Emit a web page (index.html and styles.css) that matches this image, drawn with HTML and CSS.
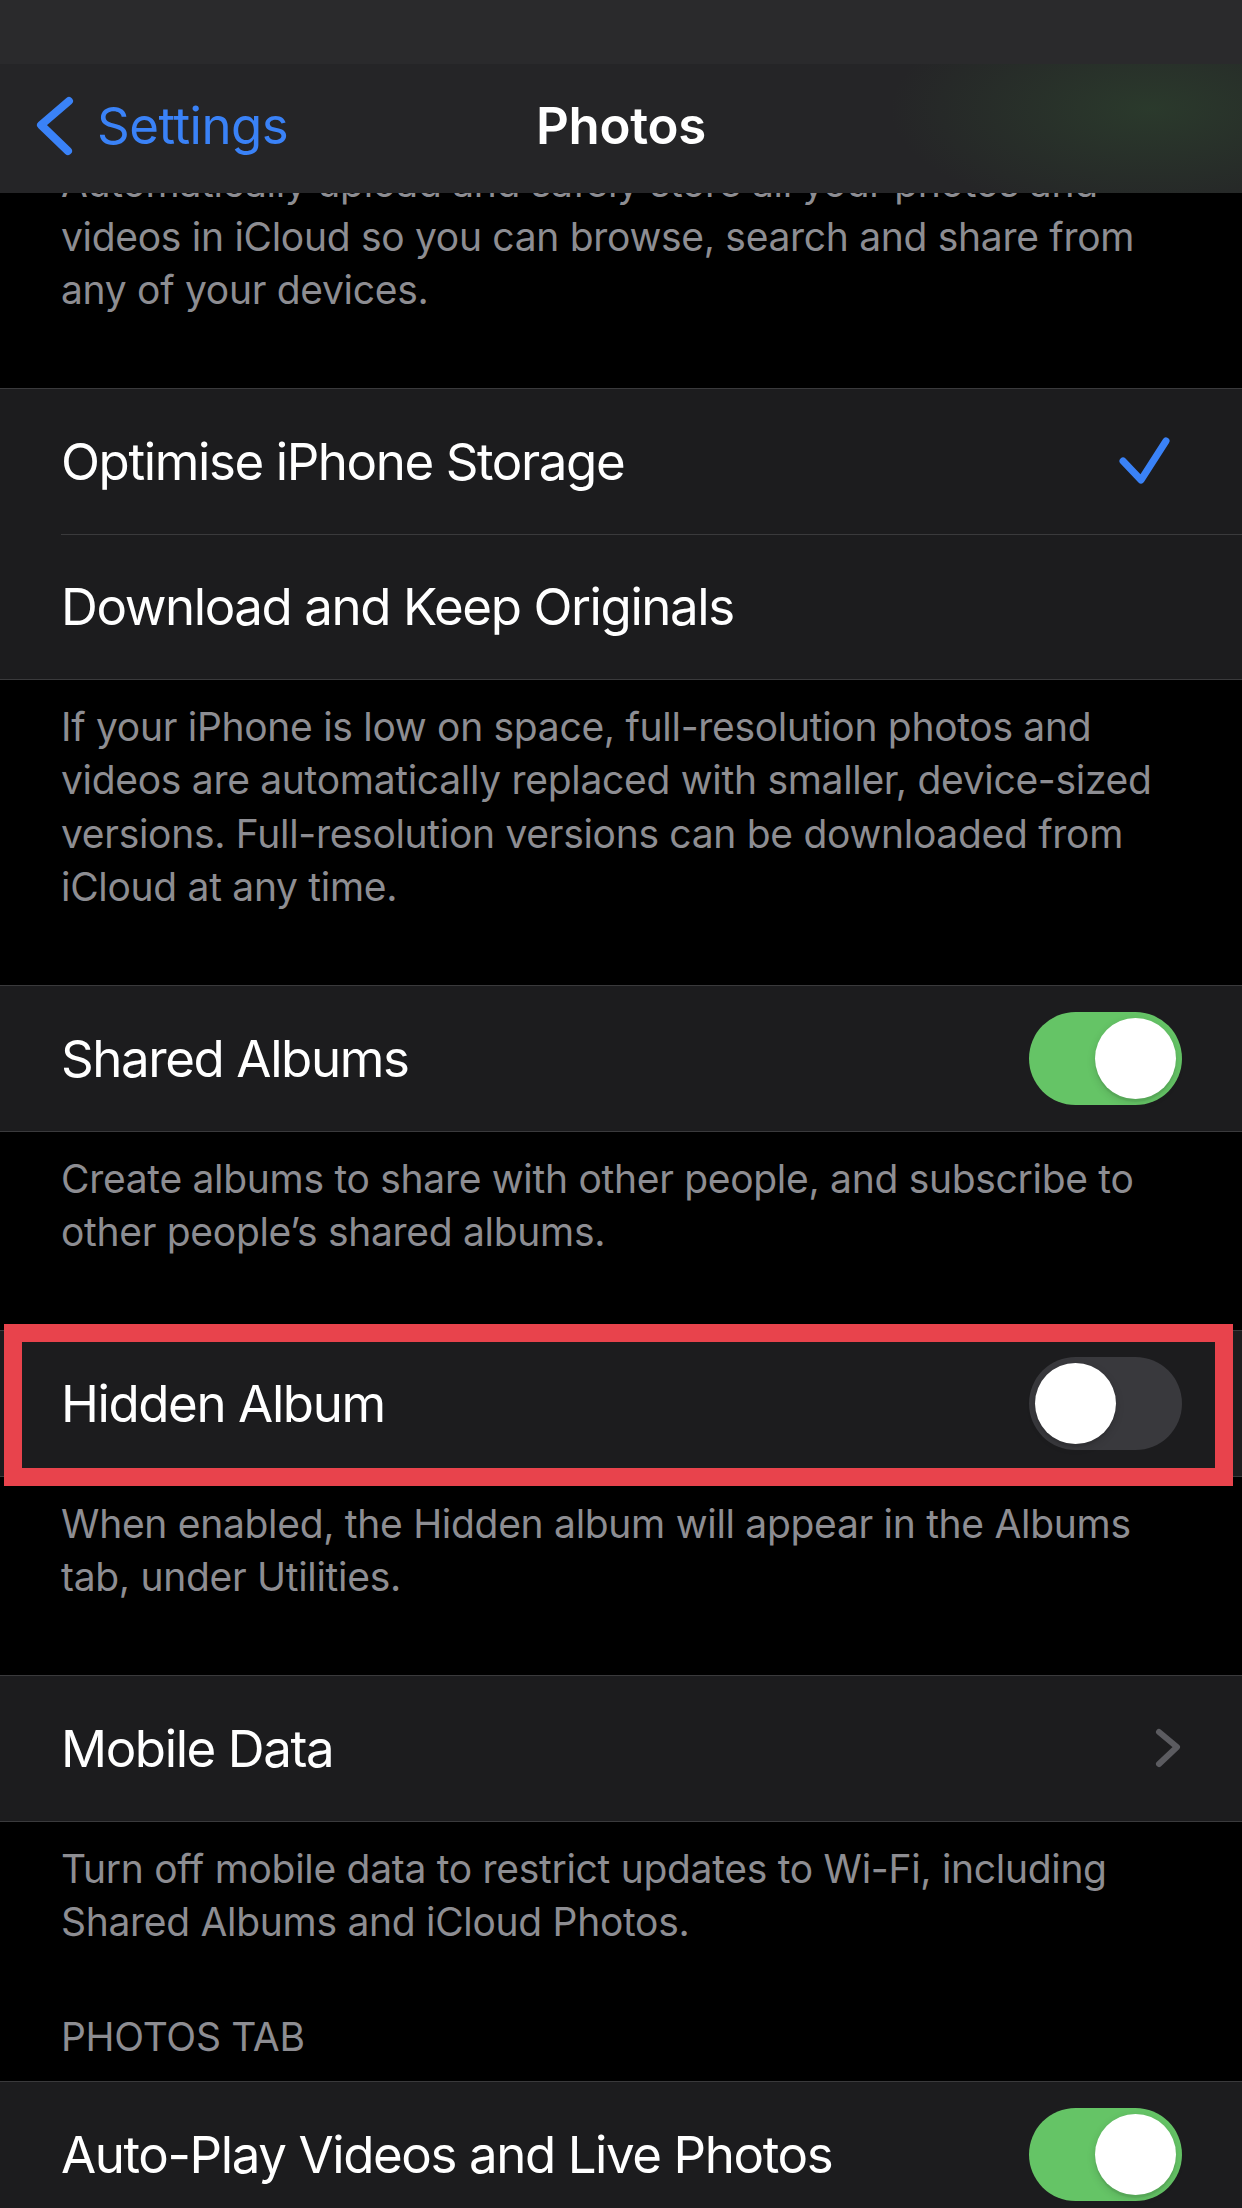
FILE: index.html
```html
<!DOCTYPE html>
<html lang="en">
<head>
    <meta charset="UTF-8">
    <meta name="viewport" content="width=device-width, initial-scale=1.0">
    <title>Photos</title>
    <link rel="stylesheet" href="styles.css">
</head>
<body>
    <header class="topbar">
        <div class="status"></div>
        <nav class="nav">
            <a class="back" href="#">
                <svg class="back-icon" width="40" height="60" viewBox="0 0 40 60">
                    <polyline points="33,5 5,29 32,55" />
                </svg>
                <span>Settings</span>
            </a>
            <h1 class="title">Photos</h1>
        </nav>
    </header>

    <main class="settings">
        <p class="footer">Automatically upload and safely store all your photos and<br>videos in iCloud so you can browse, search and share from<br>any of your devices.</p>

        <section class="group">
            <div class="row">
                <span class="label">Optimise iPhone Storage</span>
                <svg class="check" width="56" height="52" viewBox="0 0 56 52">
                    <polyline points="7,26 25,45 50,6" />
                </svg>
            </div>
            <div class="row">
                <span class="label">Download and Keep Originals</span>
            </div>
        </section>
        <p class="footer">If your iPhone is low on space, full-resolution photos and<br>videos are automatically replaced with smaller, device-sized<br>versions. Full-resolution versions can be downloaded from<br>iCloud at any time.</p>

        <section class="group">
            <div class="row">
                <span class="label">Shared Albums</span>
                <span class="switch on"><span class="knob"></span></span>
            </div>
        </section>
        <p class="footer">Create albums to share with other people, and subscribe to<br>other people’s shared albums.</p>

        <section class="group marked">
            <div class="row">
                <span class="label">Hidden Album</span>
                <span class="switch"><span class="knob"></span></span>
            </div>
            <div class="highlight"></div>
        </section>
        <p class="footer">When enabled, the Hidden album will appear in the Albums<br>tab, under Utilities.</p>

        <section class="group">
            <div class="row">
                <span class="label">Mobile Data</span>
                <svg class="chevron" width="28" height="42" viewBox="0 0 28 42">
                    <polyline points="5,5 23,20 5,37" />
                </svg>
            </div>
        </section>
        <p class="footer">Turn off mobile data to restrict updates to Wi-Fi, including<br>Shared Albums and iCloud Photos.</p>

        <h2 class="section-title">PHOTOS TAB</h2>
        <section class="group">
            <div class="row">
                <span class="label">Auto-Play Videos and Live Photos</span>
                <span class="switch on"><span class="knob"></span></span>
            </div>
        </section>
    </main>
</body>
</html>
```

FILE: styles.css
```css
body {
    margin: 0;
    background-color: #000;
    color: #fff;
    font-family: Inter, "Noto Sans", sans-serif;
    overflow: hidden;
}

/* top bar sits over the scrolled list */
.topbar {
    position: fixed;
    top: 0;
    left: 0;
    right: 0;
    z-index: 5;
}
.status {
    height: 64px;
    background-color: #2a2a2c;
}
.nav {
    height: 129px;
    box-sizing: border-box;
    padding-bottom: 6px;
    display: flex;
    align-items: center;
    justify-content: center;
    position: relative;
    background:
        radial-gradient(ellipse 260px 110px at 1150px 45px, rgba(55, 105, 55, 0.3), rgba(55, 105, 55, 0) 100%),
        #252527;
}
.back {
    position: absolute;
    left: 36px;
    top: 0;
    bottom: 6px;
    display: flex;
    align-items: center;
    gap: 21px;
    color: #3a82f7;
    text-decoration: none;
    font-size: 51px;
    letter-spacing: -0.5px;
}
.back-icon {
    fill: none;
    stroke: #3a82f7;
    stroke-width: 8;
    stroke-linecap: round;
    stroke-linejoin: round;
}
.title {
    margin: 0;
    font-size: 51px;
    font-weight: 600;
    letter-spacing: -0.3px;
}

.settings {
    padding-top: 136px;
}
.footer {
    margin: 0;
    padding: 20px 61px 0;
    font-size: 39px;
    line-height: 53.5px;
    letter-spacing: -0.3px;
    color: #8d8d92;
    white-space: nowrap;
}
.group {
    margin-top: 71px;
    background-color: #1c1c1e;
    border-top: 1px solid #3a3a3c;
    border-bottom: 1px solid #3a3a3c;
}
.row {
    height: 145px;
    display: flex;
    align-items: center;
    justify-content: space-between;
    padding: 0 60px 0 61px;
}
.row + .row {
    background: linear-gradient(#3a3a3c, #3a3a3c) 61px 0 / 100% 1px no-repeat;
}
.label {
    font-size: 51px;
    letter-spacing: -1.4px;
}
.check {
    margin-right: 10px;
    fill: none;
    stroke: #3a82f7;
    stroke-width: 7;
    stroke-linecap: round;
    stroke-linejoin: round;
}
.chevron {
    fill: none;
    stroke: #5b5b60;
    stroke-width: 6;
    stroke-linecap: round;
    stroke-linejoin: round;
}

.switch {
    width: 153px;
    height: 93px;
    border-radius: 47px;
    background-color: #39393d;
    display: flex;
    align-items: center;
    padding: 0 6px;
    box-sizing: border-box;
}
.switch.on {
    background-color: #65c466;
    justify-content: flex-end;
}
.knob {
    width: 81px;
    height: 81px;
    border-radius: 50%;
    background-color: #fff;
    box-shadow: 0 3px 8px rgba(0, 0, 0, 0.15), 0 3px 1px rgba(0, 0, 0, 0.06);
}

.marked {
    position: relative;
}
.highlight {
    position: absolute;
    top: -7px;
    bottom: -10px;
    left: 4px;
    right: 9px;
    border: 18px solid #e8434c;
}

.section-title {
    margin: 61px 0 0;
    padding: 0 61px 18px;
    font-size: 39px;
    line-height: 53.5px;
    font-weight: 400;
    letter-spacing: -0.3px;
    color: #8d8d92;
}
.section-title + .group {
    margin-top: 0;
}
```
